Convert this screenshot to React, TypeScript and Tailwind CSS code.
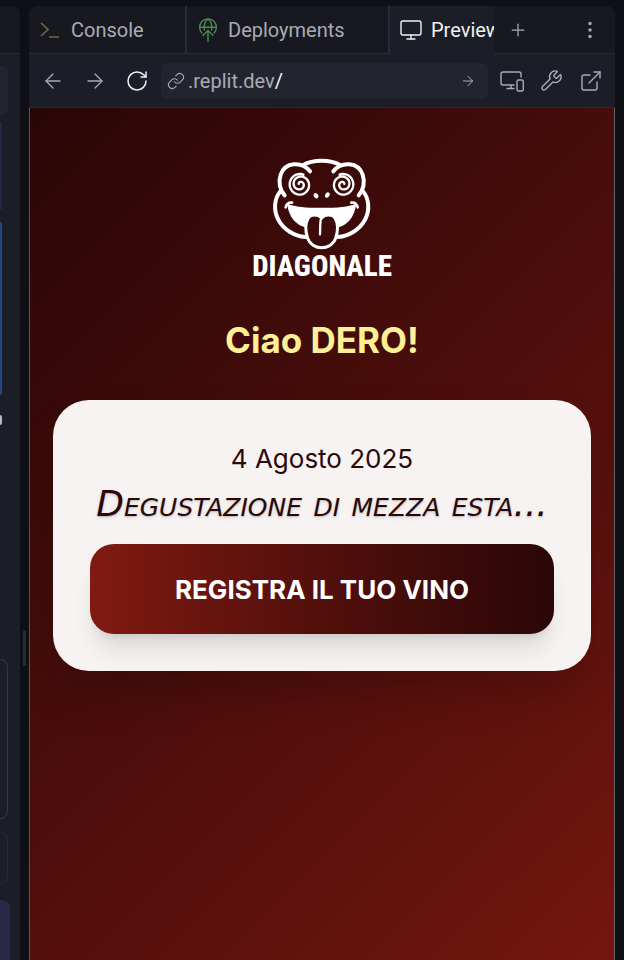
import type { ReactNode } from "react";
import {
  ArrowLeft,
  ArrowRight,
  EllipsisVertical,
  ExternalLink,
  Link,
  Monitor,
  Plus,
  RotateCw,
  Wrench,
} from "lucide-react";

function spiral(cx: number, cy: number, direction: number) {
  const points: string[] = [];
  for (let step = 0; step <= 100; step++) {
    const t = step / 100;
    const angle = -2.8 + t * Math.PI * 4.5;
    const radius = Math.min(31, 4 + 36 * t);
    const x = cx + direction * Math.cos(angle) * radius;
    const y = cy + Math.sin(angle) * radius;
    points.push(`${step === 0 ? "M" : "L"}${x.toFixed(1)} ${y.toFixed(1)}`);
  }
  return points.join(" ");
}

function Frog() {
  return (
    <svg
      viewBox="96 36 300 282"
      className="h-[94px] w-[100px]"
      fill="none"
      stroke="#fff"
      strokeWidth="12"
      strokeLinecap="round"
      strokeLinejoin="round"
      aria-hidden="true"
    >
      <path d="M210 79C186 48 135 50 122 89C114 112 120 136 134 151" />
      <path d="M280 79C304 48 355 50 368 89C376 112 370 136 356 151" />
      <path d="M190 60C218 43 272 43 300 60" />
      <path d="M122 138C102 160 100 197 115 224C130 254 164 273 196 276" />
      <path d="M368 138C388 160 390 197 375 224C360 254 326 273 294 276" />
      <path
        d="M144 179C182 195 308 195 346 179C340 215 320 238 293 245L198 245C170 238 150 215 144 179Z"
        fill="#fff"
        strokeWidth="5"
      />
      <path d="M137 187C139 177 146 171 156 173" strokeWidth="8" />
      <path d="M353 187C351 177 344 171 334 173" strokeWidth="8" />
      <path
        d="M245 219C235 207 212 207 205 219C195 236 197 262 203 280C210 299 228 308 245 308C262 308 280 299 287 280C293 262 295 236 285 219C278 207 255 207 245 219Z"
        fill="#3c0a09"
        strokeWidth="9"
      />
      <path d="M244 217C239 232 241 252 240 268" strokeWidth="7" />
      <path d={spiral(180, 118, 1)} strokeWidth="7" />
      <path d={spiral(309, 118, -1)} strokeWidth="7" />
      <ellipse cx="228" cy="152" rx="4" ry="6" transform="rotate(-30 228 152)" fill="#fff" strokeWidth="5" />
      <ellipse cx="262" cy="150" rx="4" ry="6" transform="rotate(30 262 150)" fill="#fff" strokeWidth="5" />
    </svg>
  );
}

function DeployIcon() {
  return (
    <svg
      viewBox="0 0 20 26"
      className="h-[26px] w-5 shrink-0"
      fill="none"
      stroke="#4c8b50"
      strokeWidth="1.4"
      strokeLinecap="round"
      strokeLinejoin="round"
      aria-hidden="true"
    >
      <path d="M3.800 16A8.400 8.400 0 1 1 16.200 16" />
      <path d="M1.600 10.200H18.400M6.400 13C5.600 8.500 7 4.500 10 2C13 4.500 14.400 8.500 13.600 13" />
      <path d="M10 24.500V13.500M5 18.500L10 13.500L15 18.500" />
    </svg>
  );
}

function DevicesIcon() {
  return (
    <svg
      viewBox="0 0 24 22"
      className="h-[22px] w-6"
      fill="none"
      stroke="currentColor"
      strokeWidth="1.400"
      strokeLinecap="round"
      strokeLinejoin="round"
      aria-hidden="true"
    >
      <path d="M21 7V4a2 2 0 0 0-2-2H3a2 2 0 0 0-2 2v9a2 2 0 0 0 2 2h11M11 15v3M7 18.500h7" />
      <rect x="17" y="10" width="6.300" height="11" rx="1.500" />
    </svg>
  );
}

function IconButton({ label, className = "", children }: { label: string; className?: string; children: ReactNode }) {
  return (
    <button type="button" aria-label={label} className={`flex shrink-0 items-center justify-center ${className}`}>
      {children}
    </button>
  );
}

function SidePanel() {
  return (
    <aside className="mt-[6px] flex w-5 shrink-0 flex-col overflow-hidden rounded-tr-lg bg-[#1b1e26]">
      <div className="h-12 shrink-0 border-b border-[#282a34] bg-[#181820]" />
      <div className="mt-3 h-12 w-2 shrink-0 rounded-r-md bg-[#22252e]" />
      <div className="mt-2 h-[88px] w-[2px] shrink-0 rounded-r bg-[#28244b]" />
      <div className="mt-3 h-[173px] w-[2px] shrink-0 rounded-r bg-[#224a80]" />
      <div className="mt-5 h-[10px] w-[2px] shrink-0 rounded-r-full bg-[#b5b8be]" />
      <div className="mt-[234px] h-40 w-2 shrink-0 rounded-r-lg border border-l-0 border-[#303a3b]" />
      <div className="mt-[13px] h-[52px] w-2 shrink-0 rounded-r-lg border border-l-0 border-[#262932]" />
      <div className="mt-4 w-[10px] grow rounded-tr-lg bg-[#2b2747]" />
    </aside>
  );
}

function TabBar() {
  return (
    <div className="flex h-12 shrink-0 bg-[#181820] text-xl text-[#a9acb3]">
      <div role="tablist" className="flex w-[465px] min-w-0 shrink overflow-hidden">
        <button
          type="button"
          role="tab"
          aria-selected="false"
          className="flex w-[158px] shrink-0 items-center gap-[11px] border-r-2 border-b border-[#282a34] pl-[11px]"
        >
          <svg viewBox="0 0 20 18" className="h-[18px] w-5 shrink-0" fill="none" stroke="#746747" strokeWidth="1.600" aria-hidden="true">
            <path d="M1 2L8 8.500L1 15M9 16H19" />
          </svg>
          Console
        </button>
        <button
          type="button"
          role="tab"
          aria-selected="false"
          className="flex w-[203px] shrink-0 items-center gap-[10px] border-r-2 border-b border-[#282a34] pl-[11px]"
        >
          <DeployIcon />
          Deployments
        </button>
        <button
          type="button"
          role="tab"
          aria-selected="true"
          className="flex shrink-0 items-center gap-2 bg-[#1b1e26] pl-[9px] text-[#f0f1f2]"
        >
          <Monitor className="size-6 shrink-0" strokeWidth={1.4} />
          Preview
        </button>
      </div>
      <div className="flex grow items-center justify-between border-b border-[#282a34] px-[14px]">
        <IconButton label="New tab">
          <Plus className="size-5" strokeWidth={1.5} />
        </IconButton>
        <IconButton label="More options">
          <EllipsisVertical className="size-[22px]" strokeWidth={1.8} />
        </IconButton>
      </div>
    </div>
  );
}

function AddressBar() {
  return (
    <div className="flex h-[54px] shrink-0 items-center border-b border-[#282a34] bg-[#1b1e26] px-3 text-[#a9acb3]">
      <div className="flex shrink-0 items-center gap-[18px]">
        <IconButton label="Back">
          <ArrowLeft className="size-6" strokeWidth={1.3} />
        </IconButton>
        <IconButton label="Forward">
          <ArrowRight className="size-6" strokeWidth={1.3} />
        </IconButton>
        <IconButton label="Reload" className="text-[#f0f1f2]">
          <RotateCw className="size-6" strokeWidth={1.5} />
        </IconButton>
      </div>
      <div className="ml-3 flex h-9 min-w-0 grow items-center rounded-md bg-[#22252e] pr-3 pl-[6px] text-xl">
        <Link className="size-[18px] shrink-0" strokeWidth={1.5} />
        <a href="#preview" className="ml-[3px] grow truncate">
          .replit.dev<span className="text-[#f0f1f2]">/</span>
        </a>
        <IconButton label="Go">
          <ArrowRight className="size-4" strokeWidth={1.5} />
        </IconButton>
      </div>
      <div className="ml-3 flex shrink-0 items-center gap-4">
        <IconButton label="Device size">
          <DevicesIcon />
        </IconButton>
        <IconButton label="Developer tools">
          <Wrench className="size-[23px]" strokeWidth={1.5} />
        </IconButton>
        <IconButton label="Open in new window">
          <ExternalLink className="size-6" strokeWidth={1.4} />
        </IconButton>
      </div>
    </div>
  );
}

function Preview() {
  return (
    <main
      id="preview"
      className="flex grow flex-col items-center border-x border-l-[#66534f] border-r-[#646469] bg-linear-135 from-[#290606] via-[#4c0e0b] to-[#74160f] px-[23px] pt-[49px] font-['Inter',sans-serif]"
    >
      <Frog />
      <p className="font-['Liberation_Sans_Narrow','Roboto_Condensed',sans-serif] text-[29px] leading-[30px] font-extrabold text-white">
        DIAGONALE
      </p>
      <h1 className="mt-[35px] text-[35px] leading-12 font-bold text-[#fff096]">Ciao DERO!</h1>
      <section className="mt-9 w-full rounded-[36px] bg-[#f6f3f2] p-[37px] text-center text-[#2b0808] shadow-2xl">
        <p className="text-[26px] leading-[43px]">4 Agosto 2025</p>
        <h2 className="truncate font-['Rock_Salt','DejaVu_Sans',cursive] text-4xl leading-12 font-normal italic [font-variant-caps:small-caps] text-shadow-md">
          Degustazione di mezza esta...
        </h2>
        <button
          type="button"
          className="mt-4 h-[90px] w-full rounded-3xl bg-linear-to-r from-[#801a12] via-[#520f0b] to-[#2b0707] text-[26px] font-bold text-white shadow-xl"
        >
          REGISTRA IL TUO VINO
        </button>
      </section>
    </main>
  );
}

export default function App() {
  return (
    <div className="flex min-h-screen bg-[#0e1015] font-['Roboto',sans-serif]">
      <SidePanel />
      <div className="flex w-[9px] shrink-0 flex-col items-center pt-[630px]">
        <div className="h-9 w-[3px] rounded-full bg-[#292a33]" />
      </div>
      <div className="mt-[6px] mr-[9px] flex min-w-0 grow flex-col overflow-hidden rounded-t-lg">
        <TabBar />
        <AddressBar />
        <Preview />
      </div>
    </div>
  );
}
